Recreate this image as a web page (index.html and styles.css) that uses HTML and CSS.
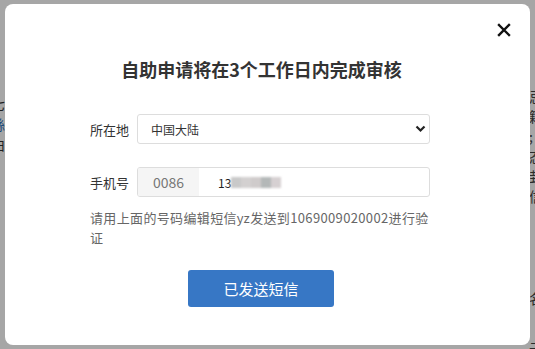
FILE: index.html
```html
<!DOCTYPE html>
<html>
<head>
    <title>自助申请</title>
    <link rel="stylesheet" href="styles.css">
</head>
<body>
    <div class="page">
        <div class="page-left">
            <b>c</b>
            <span>七</span>
            <span class="link">絲</span>
            <span>由</span>
        </div>
        <div class="page-right">
            <span>忌</span>
            <span>籍</span>
            <span>;</span>
            <span>态</span>
            <span>卦</span>
            <span>信</span>
            <span class="gap">名</span>
            <span class="gap2">元</span>
        </div>
    </div>

    <div class="mask"></div>

    <div class="dialog">
        <button class="close-btn">
            <svg width="14" height="14" viewBox="0 0 14 14">
                <path d="M2 2 L12 12 M12 2 L2 12" stroke="#111" stroke-width="2.4" stroke-linecap="square"/>
            </svg>
        </button>
        <h2 class="dialog-title">自助申请将在3个工作日内完成审核</h2>

        <div class="form">
            <div class="form-row">
                <label>所在地</label>
                <div class="select-box">
                    <span>中国大陆</span>
                    <svg width="11" height="8" viewBox="0 0 11 8">
                        <path d="M1.5 1.5 L5.5 5.5 L9.5 1.5" fill="none" stroke="#222" stroke-width="2.2"/>
                    </svg>
                </div>
            </div>
            <div class="form-row">
                <label>手机号</label>
                <div class="phone-box">
                    <span class="prefix">0086</span>
                    <span class="phone-num">13</span>
                    <span class="blur">
                        <i class="b1"></i><i class="b2"></i><i class="b3"></i><i class="b4"></i><i class="b5"></i>
                    </span>
                </div>
            </div>
            <p class="hint">请用上面的号码编辑短信yz发送到1069009020002进行验证</p>
        </div>

        <div class="actions">
            <button class="send-btn">已发送短信</button>
        </div>
    </div>
</body>
</html>
```

FILE: styles.css
```css
* {
    box-sizing: border-box;
}
body {
    margin: 0;
    width: 535px;
    height: 349px;
    overflow: hidden;
    font-family: "Noto Sans CJK SC", "Noto Sans", sans-serif;
    background-color: #fff;
    color: #333;
    position: relative;
}
.page {
    display: flex;
    justify-content: space-between;
    height: 349px;
    font-size: 14px;
    color: #333;
}
.page-left {
    display: flex;
    flex-direction: column;
    margin-left: -9px;
    padding-top: 60px;
    line-height: 20px;
}
.page-left b {
    font-size: 16px;
    margin-bottom: 14px;
}
.page-left .link {
    color: #2a6fba;
}
.page-right {
    display: flex;
    flex-direction: column;
    margin-right: -8px;
    padding-top: 86px;
    line-height: 20px;
    color: #444;
}
.page-right .gap {
    margin-top: 82px;
}
.page-right .gap2 {
    margin-top: 30px;
}
.mask {
    position: absolute;
    inset: 0;
    background: rgba(0, 0, 0, 0.35);
}
.dialog {
    position: absolute;
    left: 5px;
    top: 4px;
    width: 525px;
    height: 341px;
    background: #fff;
    border-radius: 8px;
    display: flex;
    flex-direction: column;
    align-items: center;
}
.close-btn {
    position: absolute;
    right: 19px;
    top: 19px;
    width: 14px;
    height: 14px;
    padding: 0;
    border: none;
    background: none;
    display: flex;
}
.dialog-title {
    margin: 46px 0 0 -12px;
    font-size: 18px;
    font-weight: bold;
    line-height: 38px;
    color: #333;
}
.form {
    width: 340px;
    margin-top: 26px;
    margin-left: -15px;
}
.form-row {
    display: flex;
    align-items: center;
    margin-bottom: 23px;
}
.form-row label {
    width: 47px;
    font-size: 13px;
    color: #333;
}
.select-box {
    flex: 1;
    height: 30px;
    border: 1px solid #ddd;
    border-radius: 3px;
    display: flex;
    align-items: center;
    justify-content: space-between;
    padding: 0 3px 0 13px;
    font-size: 12px;
    color: #333;
}
.phone-box {
    flex: 1;
    height: 30px;
    border: 1px solid #ddd;
    border-radius: 3px;
    display: flex;
    align-items: center;
    overflow: hidden;
}
.prefix {
    width: 61px;
    height: 100%;
    background: #f5f5f5;
    color: #777;
    font-size: 14px;
    display: flex;
    align-items: center;
    padding-left: 15px;
}
.phone-num {
    margin-left: 19px;
    font-size: 12px;
    color: #222;
}
.blur {
    display: flex;
    height: 11px;
    filter: blur(0.8px);
}
.blur i {
    width: 10px;
    height: 11px;
}
.b1 { background: #c9c9c9; }
.b2 { background: #d3d0d0; }
.b3 { background: #cfcbcb; }
.b4 { background: #b4b8b8; }
.b5 { background: #d6d0d2; }
.hint {
    margin: -12px 0 0 0;
    font-size: 13px;
    line-height: 20px;
    letter-spacing: 0.35px;
    color: #666;
}
.actions {
    margin-top: 22px;
    margin-left: -13px;
}
.send-btn {
    width: 146px;
    height: 37px;
    border: none;
    border-radius: 3px;
    background: #3777c5;
    color: #fff;
    font-family: "Noto Sans CJK SC", sans-serif;
    font-size: 15px;
}
```
